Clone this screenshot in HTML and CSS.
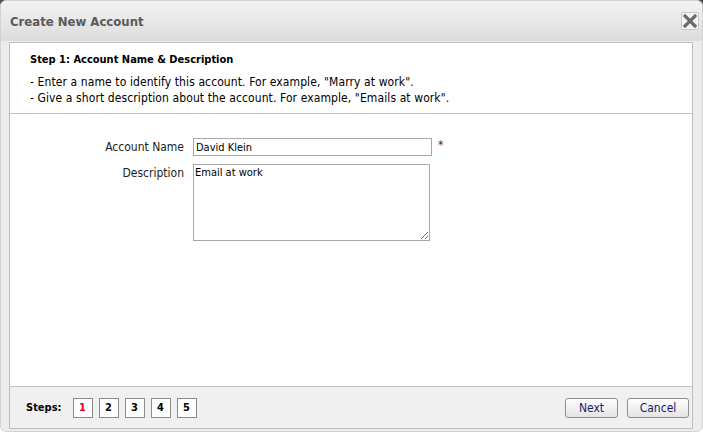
FILE: index.html
```html
<!DOCTYPE html>
<html>
<head>
<meta charset="utf-8">
<link rel="stylesheet" href="styles.css">
</head>
<body>
<div class="window">
  <div class="titlebar">
    <span class="title">Create New Account</span>
    <span class="close"><svg width="14" height="14" viewBox="0 0 14 14"><path d="M2 2 L12 12 M12 2 L2 12" stroke="#6a6a6a" stroke-width="3.2" stroke-linecap="square"/></svg></span>
  </div>
  <div class="panel">
    <div class="intro">
      <div class="step-title">Step 1: Account Name &amp; Description</div>
      <div class="hint">- Enter a name to identify this account. For example, "Marry at work".</div>
      <div class="hint">- Give a short description about the account. For example, "Emails at work".</div>
    </div>
    <div class="form">
      <div class="row">
        <label class="label">Account Name</label>
        <input class="text" type="text" value="David Klein">
        <span class="req">*</span>
      </div>
      <div class="row">
        <label class="label">Description</label>
        <textarea class="area">Email at work</textarea>
      </div>
    </div>
    <div class="footer">
      <div class="steps">
        <span class="steps-label">Steps:</span>
        <span class="step current">1</span>
        <span class="step">2</span>
        <span class="step">3</span>
        <span class="step">4</span>
        <span class="step">5</span>
      </div>
      <div class="buttons">
        <button class="btn btn-next">Next</button>
        <button class="btn btn-cancel">Cancel</button>
      </div>
    </div>
  </div>
</div>
</body>
</html>
```
FILE: styles.css
```css
html {
  background: linear-gradient(#4b5361 0, #4b5361 6px, #ffffff 6px);
  height: 100%;
}
body {
  margin: 0;
  font-family: "DejaVu Sans Condensed", "DejaVu Sans", sans-serif;
  font-size: 12px;
  color: #000;
}
.window {
  height: 430px;
  border: 1px solid #d2d2d2;
  border-radius: 6px;
  background: #ececec;
  display: flex;
  flex-direction: column;
  overflow: hidden;
}
.titlebar {
  height: 40px;
  flex: none;
  background: linear-gradient(#f3f3f3, #dcdcdc);
  display: flex;
  align-items: center;
  justify-content: space-between;
  padding: 0 3px 0 9px;
}
.title {
  font-weight: bold;
  font-size: 13px;
  color: #5a5a5a;
  margin-top: 1px;
}
.close {
  width: 16px;
  height: 16px;
  border: 1px solid #c4c4c4;
  border-radius: 2px;
  background: #f4f4f4;
  display: flex;
  align-items: center;
  justify-content: center;
}
.panel {
  flex: 1;
  margin: 1px 9px 2px 8px;
  border: 1px solid #bdbdbd;
  background: #fff;
  display: flex;
  flex-direction: column;
}
.intro {
  padding: 9px 20px 7px 20px;
  border-bottom: 1px solid #c4c4c4;
}
.step-title {
  font-weight: bold;
  font-size: 11px;
  line-height: 16px;
  margin-bottom: 6px;
}
.hint {
  line-height: 16px;
  letter-spacing: 0.1px;
}
.form {
  flex: 1;
  padding-top: 24px;
}
.row {
  display: flex;
  align-items: flex-start;
  margin-bottom: 8px;
}
.label {
  width: 174px;
  text-align: right;
  padding-right: 9px;
  line-height: 18px;
  color: #222;
}
.text {
  width: 239px;
  height: 18px;
  box-sizing: border-box;
  border: 1px solid #a8a8a8;
  padding: 0 2px;
  margin: 0;
  font: inherit;
  font-size: 11px;
}
.req {
  margin-left: 6px;
  line-height: 14px;
  color: #333;
}
.area {
  width: 237px;
  height: 77px;
  box-sizing: border-box;
  border: 1px solid #a8a8a8;
  padding: 1px 1px;
  margin: 0;
  font: inherit;
  font-size: 11px;
  resize: both;
}
.footer {
  height: 41px;
  flex: none;
  border-top: 1px solid #c4c4c4;
  background: #f0f0f0;
  display: flex;
  align-items: center;
  justify-content: space-between;
  padding: 0 3px 0 16px;
}
.steps {
  display: flex;
  align-items: center;
  gap: 6px;
}
.steps-label {
  font-weight: bold;
  font-size: 11px;
  margin-right: 5px;
}
.step {
  width: 18px;
  height: 18px;
  border: 1px solid #8c8c8c;
  display: flex;
  align-items: center;
  justify-content: center;
  font-weight: bold;
  font-size: 11px;
  background: #fff;
}
.step.current {
  color: #e8002a;
}
.buttons {
  display: flex;
  gap: 9px;
}
.btn {
  height: 20px;
  border: 1px solid #8e8e8e;
  border-radius: 3px;
  background: linear-gradient(#ffffff, #e4e4e4);
  font: inherit;
  color: #1a1a6e;
  padding: 0;
}
.btn-next { width: 53px; }
.btn-cancel { width: 62px; }
```
